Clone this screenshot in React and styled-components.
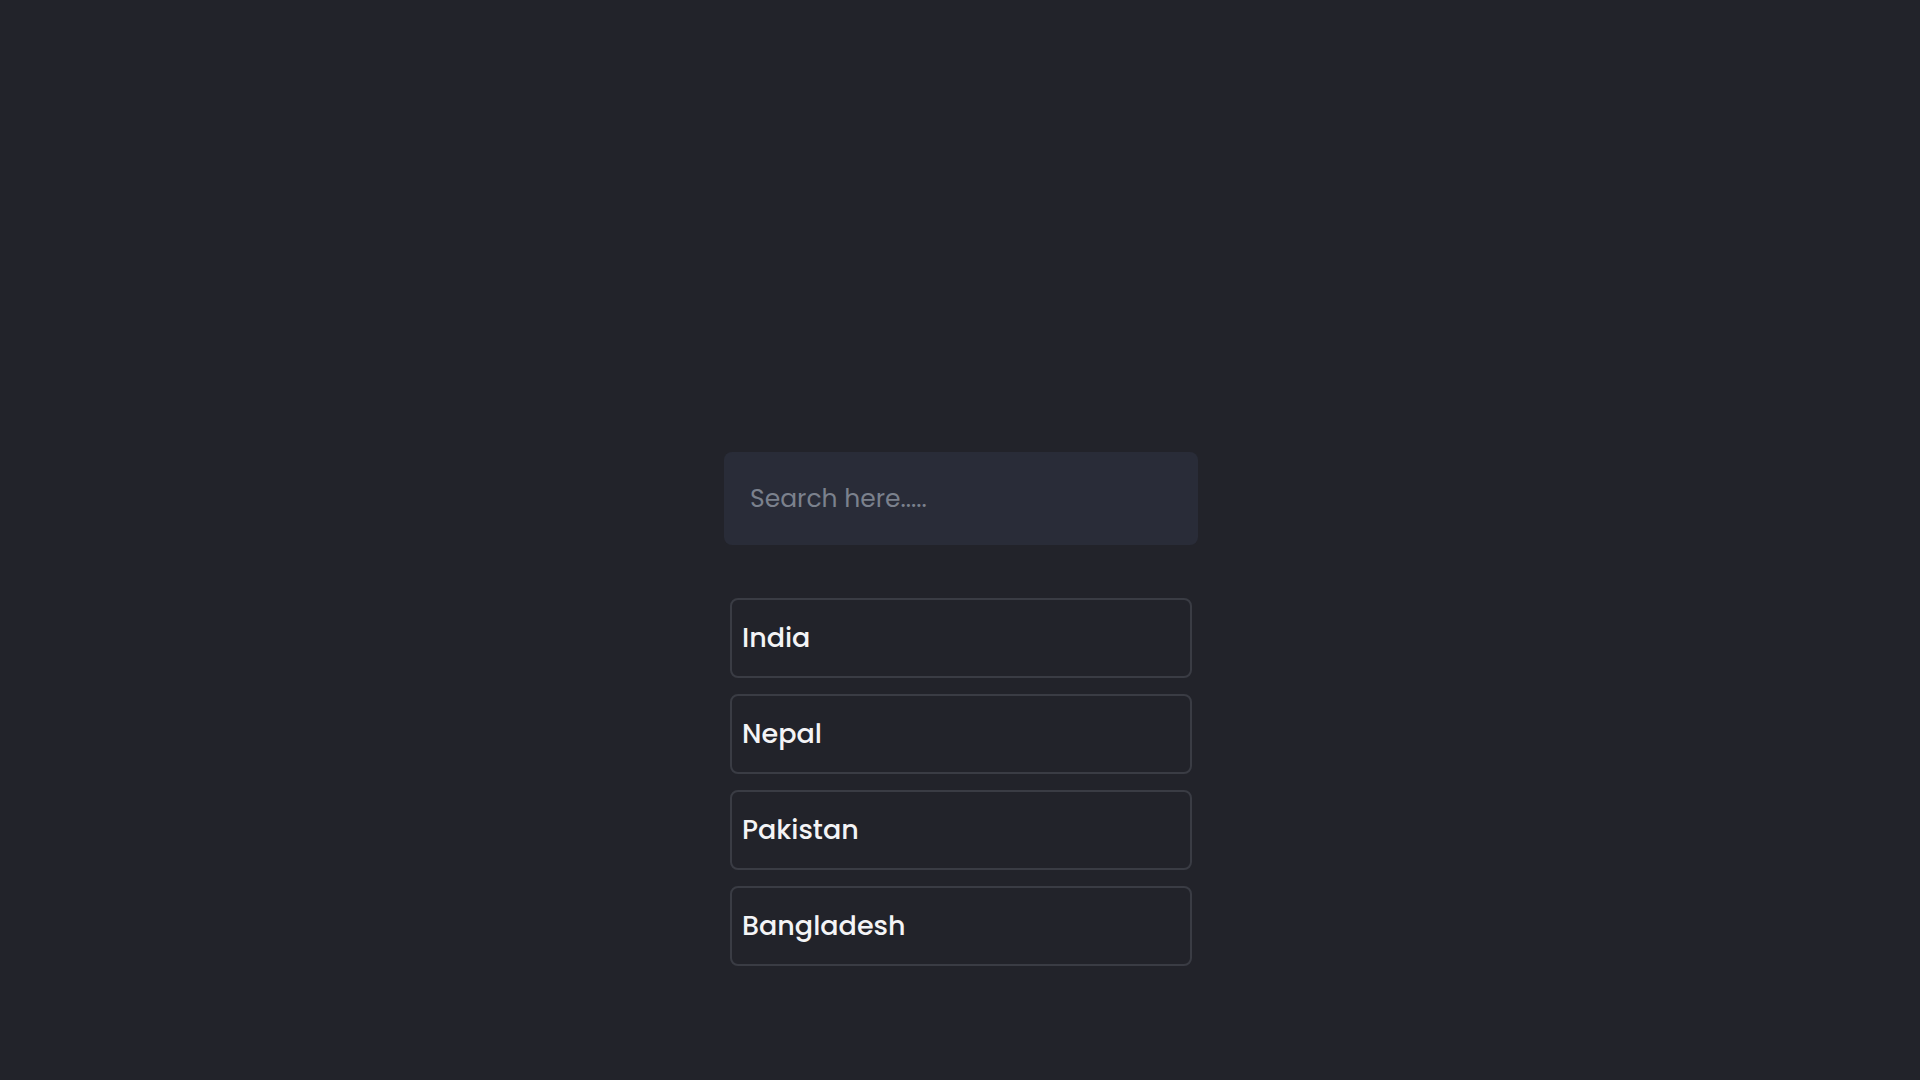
import React from "react";
import styled, { createGlobalStyle } from "styled-components";

const Global = createGlobalStyle`
  html, body { margin: 0; background: #22232a; }
  body { font-family: "Poppins", "Inter", "Open Sans", sans-serif; }
`;

const Page = styled.div`
  min-height: 1080px;
  display: flex;
  flex-direction: column;
  align-items: center;
  padding-top: 452px;
  box-sizing: border-box;
  padding-left: 2px;
`;

const Search = styled.input`
  width: 474px;
  height: 93px;
  box-sizing: border-box;
  background: #292c38;
  border: none;
  border-radius: 8px;
  padding: 0 26px;
  font-family: inherit;
  font-size: 25px;
  color: #e6e6e6;
  outline: none;
  &::placeholder { color: #7b818d; }
`;

const List = styled.ul`
  list-style: none;
  margin: 53px 0 0;
  padding: 0;
  display: flex;
  flex-direction: column;
  gap: 16px;
`;

const Item = styled.li`
  width: 462px;
  height: 80px;
  box-sizing: border-box;
  border: 2px solid #3a3c44;
  border-radius: 8px;
  display: flex;
  align-items: center;
  padding: 0 10px;
  color: #f4f4f6;
  font-size: 27px;
  font-weight: 500;
`;

export default function App() {
  return (
    <>
      <Global />
      <Page>
        <Search placeholder="Search here....." />
        <List>
          {["India", "Nepal", "Pakistan", "Bangladesh"].map((c) => (
            <Item key={c}>{c}</Item>
          ))}
        </List>
      </Page>
    </>
  );
}
